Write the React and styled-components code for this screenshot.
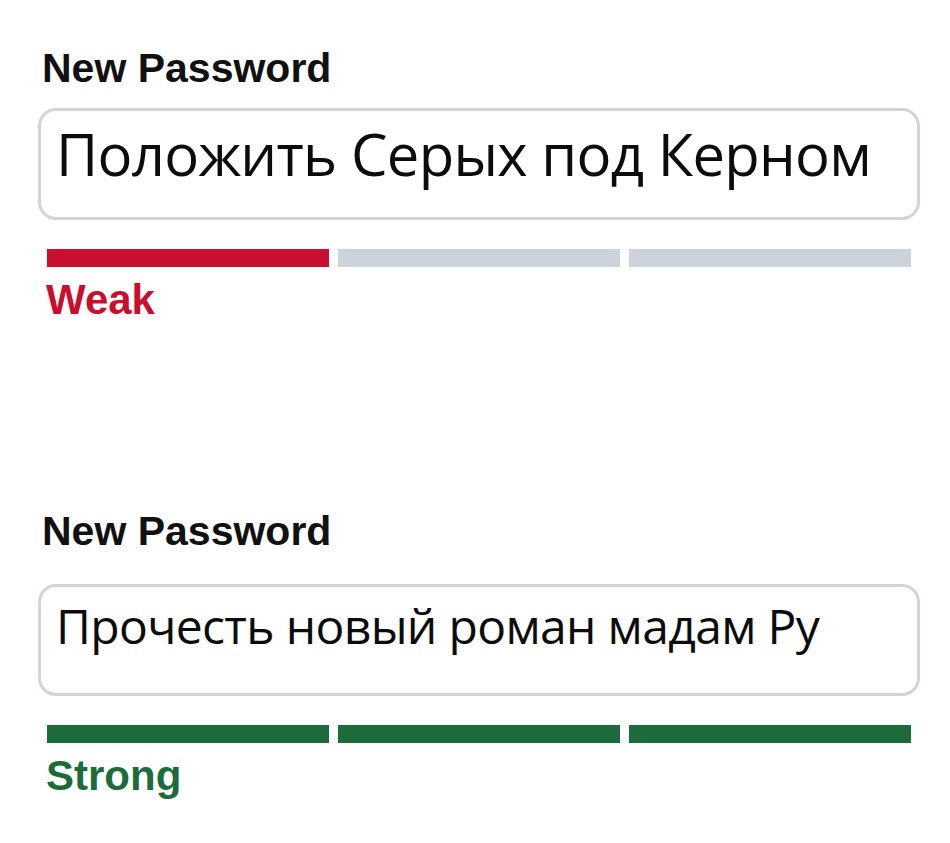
import React from "react";
import styled, { createGlobalStyle } from "styled-components";

const GlobalStyle = createGlobalStyle`
  html, body {
    margin: 0;
    padding: 0;
    background: #ffffff;
  }
`;

const Page = styled.div`
  width: 950px;
  height: 843px;
  box-sizing: border-box;
  padding: 48px 30px 0 38px;
  display: flex;
  flex-direction: column;
  gap: 191px;
  overflow: hidden;
`;

const Field = styled.div`
  display: flex;
  flex-direction: column;
`;

const Label = styled.div`
  font-family: "Liberation Sans", Arial, sans-serif;
  font-weight: 700;
  font-size: 41px;
  line-height: 40px;
  color: #111;
  padding-left: 4px;
  margin-bottom: ${(p) => p.$gap}px;
`;

const InputBox = styled.div`
  width: 882px;
  height: 112px;
  box-sizing: border-box;
  border: 3px solid #d3d4da;
  border-radius: 18px;
  padding: ${(p) => p.$padTop}px 14px 0 15px;
  font-family: "Open Sans", "Noto Sans", sans-serif;
  font-size: ${(p) => p.$size}px;
  letter-spacing: ${(p) => p.$track}px;
  line-height: 1.2;
  color: #0c0c0c;
  white-space: nowrap;
`;

const Meter = styled.div`
  display: grid;
  grid-template-columns: repeat(3, 1fr);
  gap: 9px;
  width: 864px;
  margin: 29px 0 13px 9px;
`;

const Segment = styled.div`
  height: 18px;
  background: ${(p) => (p.$on ? p.$color : "#cdd3db")};
`;

const Strength = styled.div`
  font-family: "Liberation Sans", Arial, sans-serif;
  font-weight: 700;
  font-size: 42px;
  line-height: 40px;
  color: ${(p) => p.$color};
  padding-left: 8px;
`;

const fields = [
  {
    text: "Положить Серых под Керном",
    size: 58,
    track: -0.7,
    padTop: 8,
    labelGap: 20,
    level: 1,
    word: "Weak",
    color: "#c8102e",
  },
  {
    text: "Прочесть новый роман мадам Ру",
    size: 48,
    track: -0.65,
    padTop: 10,
    labelGap: 33,
    level: 3,
    word: "Strong",
    color: "#1d6b3b",
  },
];

export default function App() {
  return (
    <>
      <GlobalStyle />
      <Page>
        {fields.map((f) => (
          <Field key={f.word}>
            <Label $gap={f.labelGap}>New Password</Label>
            <InputBox $size={f.size} $track={f.track} $padTop={f.padTop}>
              {f.text}
            </InputBox>
            <Meter>
              {[0, 1, 2].map((i) => (
                <Segment key={i} $on={i < f.level} $color={f.color} />
              ))}
            </Meter>
            <Strength $color={f.color}>{f.word}</Strength>
          </Field>
        ))}
      </Page>
    </>
  );
}
